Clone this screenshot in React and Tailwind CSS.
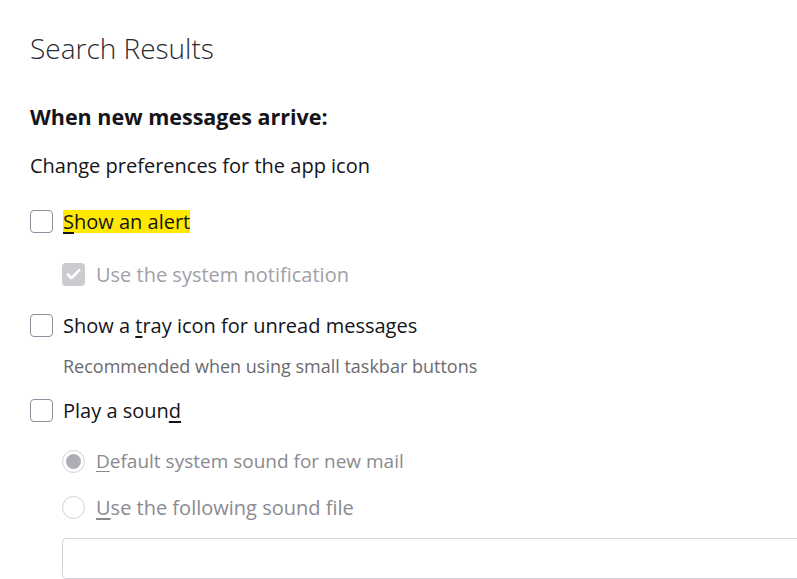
import { Check } from 'lucide-react';

const font = { fontFamily: '"Open Sans", "Noto Sans", sans-serif' };

function Box({ checked = false, disabled = false }) {
  if (checked && disabled) {
    return (
      <span className="flex h-[23px] w-[23px] shrink-0 items-center justify-center rounded-[4px] bg-[#cbcbd0]">
        <Check className="h-[17px] w-[17px] text-white" strokeWidth={3.5} />
      </span>
    );
  }
  return <span className="h-[23px] w-[23px] shrink-0 rounded-[4px] border border-[#8f8f9d] bg-white" />;
}

function Radio({ selected = false }) {
  return (
    <span className="flex h-[23px] w-[23px] shrink-0 items-center justify-center rounded-full border border-[#d2d2d8] bg-white">
      {selected && <span className="h-[15px] w-[15px] rounded-full bg-[#adadb5]" />}
    </span>
  );
}

export default function App() {
  return (
    <div className="min-h-[579px] overflow-hidden bg-white pl-[30px] pt-[30px] text-[#15141a]" style={font}>
      <h1 className="h-[36px] text-[28px] font-light leading-[36px] text-[#2b2a33]">Search Results</h1>

      <h2 className="mt-[37px] h-[28px] text-[21.5px] font-bold leading-[28px]">When new messages arrive:</h2>

      <p className="mt-[21px] h-[28px] text-[20px] leading-[28px]">Change preferences for the app icon</p>

      <div className="mt-[30px] flex h-[23px] items-center gap-[10px]">
        <Box />
        <span className="bg-[#ffe900] text-[20px] leading-[23px]">
          <span className="underline underline-offset-[3px]">S</span>how an alert
        </span>
      </div>

      <div className="ml-[32px] mt-[30px] flex h-[23px] items-center gap-[11px]">
        <Box checked disabled />
        <span className="text-[20px] leading-[23px] text-[#a0a0a6]">Use the system notification</span>
      </div>

      <div className="mt-[28px] flex h-[23px] items-center gap-[10px]">
        <Box />
        <span className="text-[20px] leading-[23px]">
          Show a <span className="underline underline-offset-[3px]">t</span>ray icon for unread messages
        </span>
      </div>

      <p className="ml-[33px] mt-[17px] h-[24px] text-[18px] leading-[24px] text-[#6b6b70]">
        Recommended when using small taskbar buttons
      </p>

      <div className="mt-[21px] flex h-[23px] items-center gap-[10px]">
        <Box />
        <span className="text-[20px] leading-[23px]">
          Play a soun<span className="underline underline-offset-[3px]">d</span>
        </span>
      </div>

      <div className="ml-[32px] mt-[28px] flex h-[23px] items-center gap-[11px]">
        <Radio selected />
        <span className="text-[19px] leading-[23px] text-[#8a8a90]">
          <span className="underline underline-offset-[3px]">D</span>efault system sound for new mail
        </span>
      </div>

      <div className="ml-[32px] mt-[23px] flex h-[23px] items-center gap-[11px]">
        <Radio />
        <span className="text-[20px] leading-[23px] text-[#8a8a90]">
          <span className="underline underline-offset-[3px]">U</span>se the following sound file
        </span>
      </div>

      <div className="ml-[32px] mt-[19px] h-[41px] w-[760px] rounded-[4px] border border-[#d4d4d8] bg-white" />
    </div>
  );
}
